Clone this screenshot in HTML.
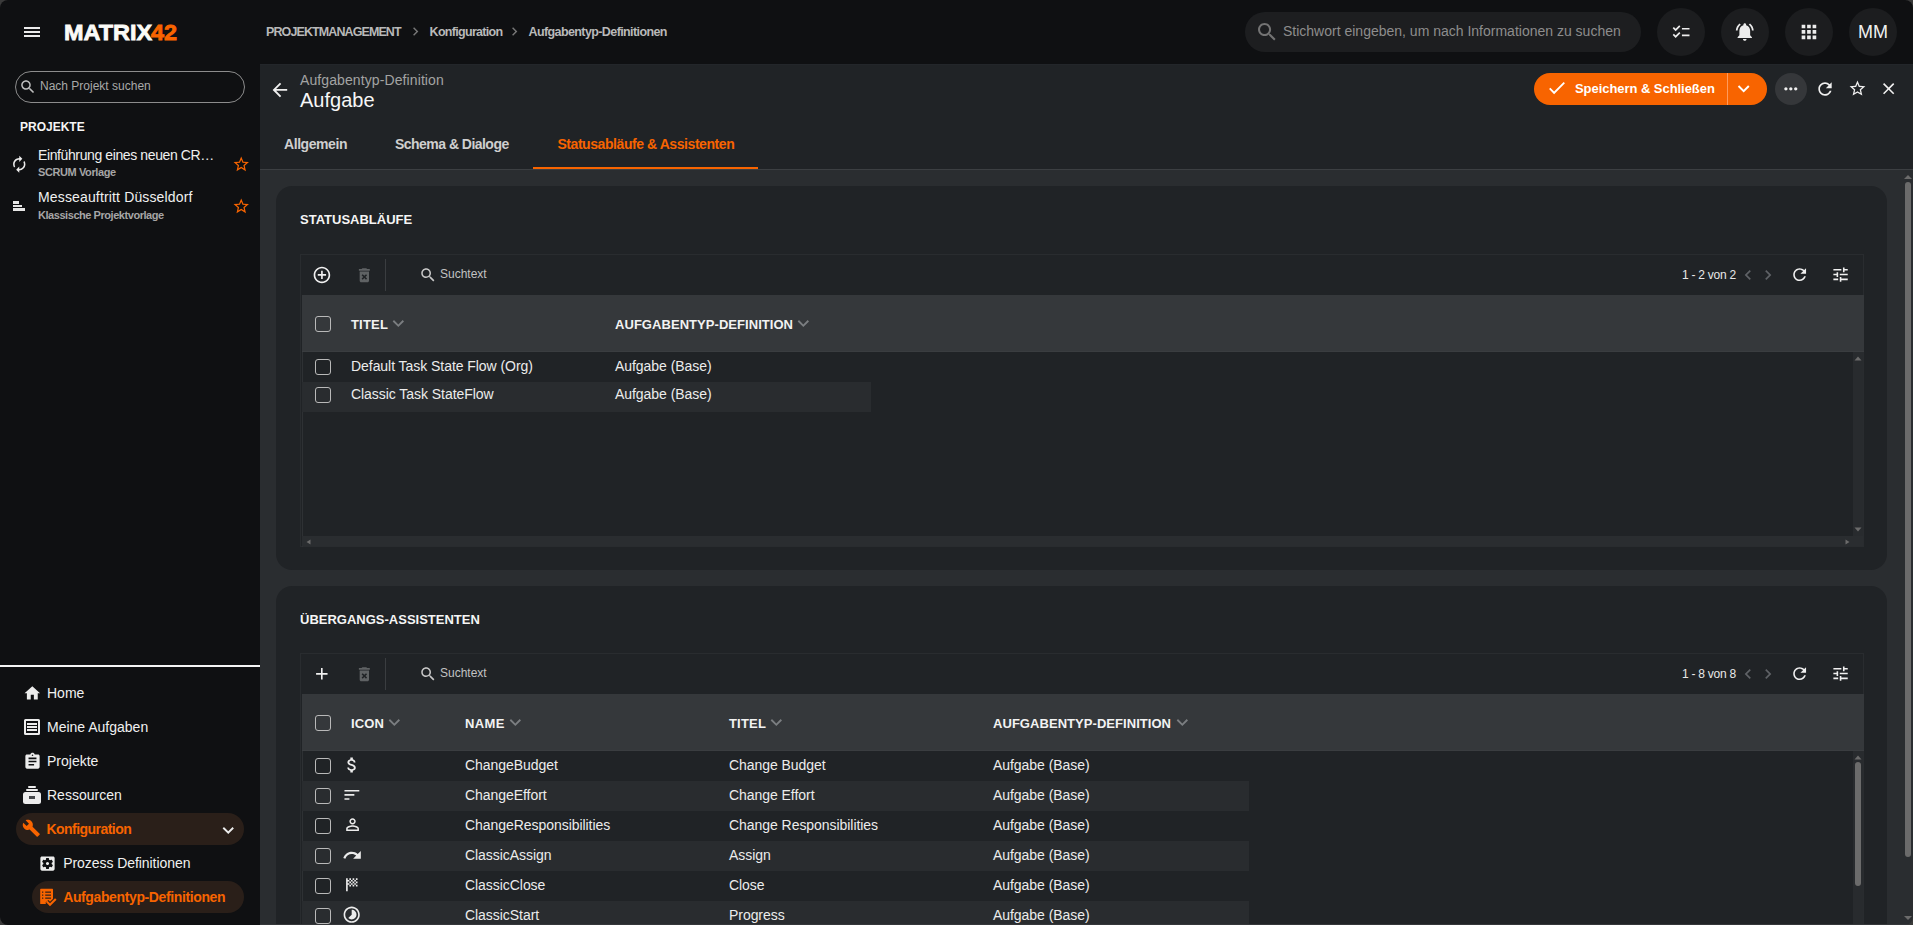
<!DOCTYPE html>
<html><head><meta charset="utf-8"><style>
html,body{margin:0;padding:0;width:1913px;height:925px;overflow:hidden;background:#0f1012}
body{position:relative;font-family:"Liberation Sans", sans-serif}
.t{position:absolute;white-space:nowrap;line-height:1}
.r{position:absolute}
.i{position:absolute;display:block;overflow:visible}
.cb{position:absolute;width:16px;height:16px;box-sizing:border-box;border:1.5px solid #b9b9b9;border-radius:3px}
</style></head><body>
<div class="r" style="left:0px;top:0px;width:1913px;height:925px;background:#0f1012;"></div>
<div class="r" style="left:260px;top:64px;width:1653px;height:861px;background:#202326;"></div>
<div class="r" style="left:260px;top:170px;width:1653px;height:755px;background:#2a2d30;"></div>
<div class="r" style="left:260px;top:169px;width:1653px;height:1px;background:#3c3f42;"></div>
<div class="r" style="left:260px;top:64px;width:1653px;height:1px;background:#23262a;"></div>
<div class="r" style="left:24px;top:27px;width:16px;height:2px;background:#ebebeb;"></div>
<div class="r" style="left:24px;top:31px;width:16px;height:2px;background:#ebebeb;"></div>
<div class="r" style="left:24px;top:35px;width:16px;height:2px;background:#ebebeb;"></div>
<div class="t" style="left:64px;top:21.6px;font-size:22px;font-weight:bold;color:#fbfbf7;letter-spacing:0px;line-height:22px;-webkit-text-stroke:0.8px #fbfbf7;transform:scaleX(1.065);transform-origin:0 0">MATRIX<span style="color:#f86400;-webkit-text-stroke:0.8px #f86400;margin-left:-1px">42</span></div>
<div class="t" style="left:266px;top:25.52px;font-size:12.5px;color:#b9b9b9;font-weight:bold;letter-spacing:-0.9px;">PROJEKTMANAGEMENT</div>
<svg class="i" style="left:406.57px;top:23.23px;width:17.04px;height:17.04px" viewBox="0 0 24 24"><path fill="#777" d="M10 6L8.59 7.41 13.17 12l-4.58 4.59L10 18l6-6z"/></svg>
<div class="t" style="left:429.6px;top:25.52px;font-size:12.5px;color:#b9b9b9;font-weight:bold;letter-spacing:-0.7px;">Konfiguration</div>
<svg class="i" style="left:505.97px;top:23.23px;width:17.04px;height:17.04px" viewBox="0 0 24 24"><path fill="#777" d="M10 6L8.59 7.41 13.17 12l-4.58 4.59L10 18l6-6z"/></svg>
<div class="t" style="left:528.5px;top:25.52px;font-size:12.5px;color:#b9b9b9;font-weight:bold;letter-spacing:-0.6px;">Aufgabentyp-Definitionen</div>
<div class="r" style="left:1245px;top:12px;width:396px;height:40px;background:#1d1e20;border-radius:20px"></div>
<svg class="i" style="left:1255.18px;top:19.88px;width:24.15px;height:24.15px" viewBox="0 0 24 24"><path fill="#737373" d="M15.5 14h-.79l-.28-.27C15.41 12.59 16 11.11 16 9.5 16 5.91 13.09 3 9.5 3S3 5.910 3 9.5 5.91 16 9.5 16c1.61 0 3.09-.59 4.23-1.57l.27.28v.79l5 4.99L20.490 19l-4.99-5zm-6 0C7.01 14 5 11.99 5 9.5S7.01 5 9.5 5 14 7.01 14 9.5 11.99 14 9.5 14z"/></svg>
<div class="t" style="left:1283px;top:24.45px;font-size:14px;color:#8d8d8d;font-weight:normal;letter-spacing:0px;">Stichwort eingeben, um nach Informationen zu suchen</div>
<div class="r" style="left:1657px;top:8px;width:48px;height:48px;background:#1c1d1f;border-radius:50%"></div>
<div class="r" style="left:1721px;top:8px;width:48px;height:48px;background:#1c1d1f;border-radius:50%"></div>
<div class="r" style="left:1785px;top:8px;width:48px;height:48px;background:#1c1d1f;border-radius:50%"></div>
<div class="r" style="left:1849px;top:8px;width:48px;height:48px;background:#1c1d1f;border-radius:50%"></div>
<svg class="i" style="left:1670.90px;top:22.25px;width:20.20px;height:20.20px" viewBox="0 0 24 24"><path fill="#ececec" d="M22 7h-9v2h9V7zm0 8h-9v2h9v-2zM5.54 11L2 7.46l1.41-1.41 2.12 2.12 4.24-4.24 1.41 1.41L5.54 11zm0 8L2 15.46l1.41-1.41 2.12 2.12 4.24-4.24 1.41 1.41L5.54 19z"/></svg>
<svg class="i" style="left:1734.23px;top:21.31px;width:21.54px;height:21.54px" viewBox="0 0 24 24"><path fill="#ececec" d="M7.58 4.08L6.15 2.65C3.75 4.48 2.17 7.3 2.03 10.5h2c.15-2.65 1.51-4.97 3.55-6.42zm12.39 6.42h2c-.15-3.2-1.73-6.02-4.12-7.85l-1.42 1.430c2.02 1.45 3.39 3.77 3.54 6.42zM18 11c0-3.07-1.64-5.64-4.5-6.32V4c0-.83-.67-1.5-1.5-1.5s-1.5.67-1.5 1.5v.68C7.63 5.36 6 7.92 6 11v5l-2 2v1h16v-1l-2-2v-5zm-6 11c.14 0 .27-.01.4-.04.65-.14 1.18-.58 1.44-1.18.1-.24.15-.5.15-.78h-4c.01 1.1.9 2 2.01 2z"/></svg>
<svg class="i" style="left:1798.00px;top:21.00px;width:21.90px;height:21.90px" viewBox="0 0 24 24"><path fill="#ececec" d="M4 8h4V4H4v4zm6 12h4v-4h-4v4zm-6 0h4v-4H4v4zm0-6h4v-4H4v4zm6 0h4v-4h-4v4zm6-10v4h4V4h-4zm-6 4h4V4h-4v4zm6 6h4v-4h-4v4zm0 6h4v-4h-4v4z"/></svg>
<div class="t" style="left:1858px;top:22.56px;font-size:18px;color:#f0f0f0;font-weight:normal;letter-spacing:0px;">MM</div>
<div class="r" style="left:15px;top:71px;width:230px;height:32px;background:transparent;border:1px solid #8c8c8c;border-radius:16px;box-sizing:border-box"></div>
<svg class="i" style="left:18.89px;top:77.99px;width:17.70px;height:17.70px" viewBox="0 0 24 24"><path fill="#bdbdbd" d="M15.5 14h-.79l-.28-.27C15.41 12.59 16 11.11 16 9.5 16 5.91 13.09 3 9.5 3S3 5.910 3 9.5 5.91 16 9.5 16c1.61 0 3.09-.59 4.23-1.57l.27.28v.79l5 4.99L20.490 19l-4.99-5zm-6 0C7.01 14 5 11.99 5 9.5S7.01 5 9.5 5 14 7.01 14 9.5 11.99 14 9.5 14z"/></svg>
<div class="t" style="left:40px;top:80.14px;font-size:12px;color:#a9a9a9;font-weight:normal;letter-spacing:0px;">Nach Projekt suchen</div>
<div class="t" style="left:20px;top:121.14px;font-size:12px;color:#f5f5f5;font-weight:bold;letter-spacing:0px;">PROJEKTE</div>
<svg class="i" style="left:9.84px;top:154.54px;width:18.52px;height:18.52px" viewBox="0 0 24 24"><path fill="#ececec" d="M12 6v3l4-4-4-4v3c-4.42 0-8 3.580-8 8 0 1.57.46 3.03 1.24 4.26L6.7 14.8c-.45-.83-.7-1.79-.7-2.8 0-3.31 2.69-6 6-6zm6.76 1.74L17.3 9.2c.44.84.7 1.79.7 2.8 0 3.31-2.69 6-6 6v-3l-4 4 4 4v-3c4.42 0 8-3.58 8-8 0-1.57-.46-3.03-1.24-4.26z"/></svg>
<div class="t" style="left:38px;top:148.25px;font-size:14px;color:#f0f0f0;font-weight:normal;letter-spacing:-0.39px;">Einführung eines neuen CR…</div>
<div class="t" style="left:38px;top:167.39px;font-size:11px;color:#a6a6a6;font-weight:bold;letter-spacing:-0.4px;">SCRUM Vorlage</div>
<svg class="i" style="left:232.12px;top:155.00px;width:18.46px;height:18.46px" viewBox="0 0 24 24"><path fill="#f86400" d="M22 9.24l-7.19-.62L12 2 9.19 8.63 2 9.24l5.46 4.73L5.82 21 12 17.27 18.18 21l-1.63-7.03L22 9.24zM12 15.4l-3.76 2.27 1-4.28-3.32-2.88 4.38-.38L12 6.1l1.71 4.04 4.38.38-3.32 2.88 1 4.28L12 15.4z"/></svg>
<div class="r" style="left:13px;top:201px;width:13px;height:10px"><div class="r" style="left:0;top:0;width:6px;height:3px;background:#e6e6e6"></div><div class="r" style="left:0;top:4px;width:9px;height:2.2px;background:#e6e6e6"></div><div class="r" style="left:0;top:7px;width:12.2px;height:3px;background:#e6e6e6"></div></div>
<div class="t" style="left:38px;top:190.05px;font-size:14px;color:#f0f0f0;font-weight:normal;letter-spacing:0.15px;">Messeauftritt Düsseldorf</div>
<div class="t" style="left:38px;top:209.69px;font-size:11px;color:#a6a6a6;font-weight:bold;letter-spacing:-0.45px;">Klassische Projektvorlage</div>
<svg class="i" style="left:232.12px;top:197.20px;width:18.46px;height:18.46px" viewBox="0 0 24 24"><path fill="#f86400" d="M22 9.24l-7.19-.62L12 2 9.19 8.63 2 9.24l5.46 4.73L5.82 21 12 17.27 18.18 21l-1.63-7.03L22 9.24zM12 15.4l-3.76 2.27 1-4.28-3.32-2.88 4.38-.38L12 6.1l1.71 4.04 4.38.38-3.32 2.88 1 4.28L12 15.4z"/></svg>
<div class="r" style="left:0px;top:665px;width:260px;height:2px;background:#f4f4f4;"></div>
<svg class="i" style="left:22.63px;top:683.57px;width:18.64px;height:18.64px" viewBox="0 0 24 24"><path fill="#ececec" d="M10 20v-6h4v6h5v-8h3L12 3 2 12h3v8z"/></svg>
<div class="t" style="left:47px;top:686.35px;font-size:14px;color:#f0f0f0;font-weight:normal;letter-spacing:0px;">Home</div>
<div class="r" style="left:24.3px;top:719px;width:15.7px;height:15.7px;box-sizing:border-box;border:2px solid #ececec;border-radius:1.5px"><div class="r" style="left:1px;top:2px;width:9.7px;height:2px;background:#ececec"></div><div class="r" style="left:1px;top:5px;width:9.7px;height:2px;background:#ececec"></div><div class="r" style="left:1px;top:8px;width:9.7px;height:2px;background:#ececec"></div></div>
<div class="t" style="left:47px;top:720.45px;font-size:14px;color:#f0f0f0;font-weight:normal;letter-spacing:0px;">Meine Aufgaben</div>
<svg class="i" style="left:22.60px;top:751.54px;width:19.01px;height:19.01px" viewBox="0 0 24 24"><path fill="#ececec" d="M19 3h-4.18C14.4 1.84 13.3 1 12 1c-1.3 0-2.4.84-2.820 2H5c-1.1 0-2 .9-2 2v14c0 1.1.9 2 2 2h14c1.1 0 2-.9 2-2V5c0-1.1-.9-2-2-2zm-7 0c.55 0 1 .45 1 1s-.45 1-1 1-1-.45-1-1 .45-1 1-1zm2 14H7v-2h7v2zm3-4H7v-2h10v2zm0-4H7V7h10v2z"/></svg>
<div class="t" style="left:47px;top:753.95px;font-size:14px;color:#f0f0f0;font-weight:normal;letter-spacing:0px;">Projekte</div>
<div class="r" style="left:23.4px;top:785.8px;width:18px;height:19px"><div class="r" style="left:4.6px;top:0;width:7.8px;height:2px;background:#ececec;border-radius:1px"></div><div class="r" style="left:2.7px;top:3.1px;width:11.9px;height:2px;background:#ececec;border-radius:1px"></div><div class="r" style="left:0;top:6px;width:17.3px;height:12.2px;background:#ececec;border-radius:2.5px"></div><div class="r" style="left:5.3px;top:10.6px;width:6.8px;height:2.4px;background:#45474a"></div></div>
<div class="t" style="left:47px;top:788.15px;font-size:14px;color:#f0f0f0;font-weight:normal;letter-spacing:0px;">Ressourcen</div>
<div class="r" style="left:16px;top:813px;width:228px;height:32px;background:#2a1f19;border-radius:16px"></div>
<svg class="i" style="left:22.06px;top:819.45px;width:18.63px;height:18.63px" viewBox="0 0 24 24"><path fill="#f86400" d="M22.7 19l-9.1-9.1c.9-2.3.4-5-1.5-6.9-2-2-5-2.4-7.4-1.3L9 6 6 9 1.6 4.7C.4 7.1.9 10.1 2.9 12.1c1.9 1.9 4.6 2.4 6.9 1.5l9.1 9.1c.4.4 1 .4 1.4 0l2.3-2.3c.5-.4.5-1.1.1-1.4z"/></svg>
<div class="t" style="left:46.4px;top:822.15px;font-size:14px;color:#f86400;font-weight:bold;letter-spacing:-0.53px;">Konfiguration</div>
<svg class="i" style="left:216.75px;top:818.72px;width:22.50px;height:22.50px" viewBox="0 0 24 24"><path fill="#ececec" d="M16.59 8.59L12 13.17 7.41 8.59 6 10l6 6 6-6z"/></svg>
<svg class="i" style="left:38.45px;top:853.50px;width:19.00px;height:19.00px" viewBox="0 0 24 24"><path fill="#ececec" d="M12 10c-1.1 0-2 .9-2 2s.9 2 2 2 2-.9 2-2-.9-2-2-2zm7-7H5c-1.11 0-2 .9-2 2v14c0 1.1.89 2 2 2h14c1.11 0 2-.9 2-2V5c0-1.1-.89-2-2-2zm-1.75 9c0 .23-.02.46-.05.68l1.48 1.16c.13.11.17.3.08.45l-1.4 2.42c-.09.15-.27.21-.43.15l-1.74-.7c-.36.28-.76.51-1.18.69l-.26 1.85c-.03.17-.18.3-.35.3h-2.8c-.17 0-.32-.13-.35-.29l-.26-1.85c-.43-.18-.82-.41-1.18-.69l-1.74.7c-.16.06-.34 0-.43-.15l-1.4-2.42c-.09-.15-.05-.34.08-.45l1.48-1.16c-.03-.23-.05-.46-.05-.69 0-.23.02-.46.05-.68l-1.48-1.16c-.13-.11-.17-.3-.08-.45l1.4-2.42c.09-.15.27-.21.43-.15l1.74.7c.36-.28.76-.51 1.18-.69l.26-1.85c.03-.17.18-.3.35-.3h2.8c.17 0 .32.13.35.29l.26 1.85c.43.18.82.41 1.18.69l1.74-.7c.16-.06.34 0 .43.15l1.4 2.42c.09.15.05.34-.08.45l-1.48 1.16c.03.23.05.46.05.69z"/></svg>
<div class="t" style="left:63.2px;top:855.95px;font-size:14px;color:#f0f0f0;font-weight:normal;letter-spacing:-0.06px;">Prozess Definitionen</div>
<div class="r" style="left:32px;top:881px;width:212px;height:32px;background:#2a1f19;border-radius:16px"></div>
<svg class="i" style="left:38px;top:886px;width:20px;height:22px" viewBox="0 0 20 22"><rect x="2.2" y="2.8" width="12.8" height="15.2" rx="0.6" fill="#f86400"/><g fill="#3a2418"><rect x="4" y="5.5" width="1.3" height="1.3"/><rect x="4" y="8.5" width="1.3" height="1.3"/><rect x="4" y="11.5" width="1.3" height="1.3"/><rect x="7.2" y="5.5" width="5.8" height="1.3"/><rect x="7.2" y="8.5" width="5.8" height="1.3"/><rect x="7.2" y="11.5" width="5.8" height="1.3"/></g><polyline points="8.8,15.6 12,18.8 17.8,13" fill="none" stroke="#2a1f19" stroke-width="4.2"/><polyline points="8.8,15.6 12,18.8 17.8,13" fill="none" stroke="#f86400" stroke-width="2.1"/></svg>
<div class="t" style="left:63.2px;top:890.15px;font-size:14px;color:#f86400;font-weight:bold;letter-spacing:-0.38px;">Aufgabentyp-Definitionen</div>
<svg class="i" style="left:268.84px;top:78.99px;width:21.83px;height:21.83px" viewBox="0 0 24 24"><path fill="#f0f0f0" d="M20 11H7.83l5.59-5.59L12 4l-8 8 8 8 1.41-1.41L7.83 13H20v-2z"/></svg>
<div class="t" style="left:300px;top:72.85px;font-size:14px;color:#a3a3a3;font-weight:normal;letter-spacing:0.1px;">Aufgabentyp-Definition</div>
<div class="t" style="left:300px;top:90.07px;font-size:20px;color:#f7f7f7;font-weight:normal;letter-spacing:0px;">Aufgabe</div>
<div class="r" style="left:1534px;top:73px;width:233px;height:32px;background:#f86400;border-radius:16px"></div>
<div class="r" style="left:1727px;top:73px;width:1px;height:32px;background:#ff9a5c;"></div>
<svg class="i" style="left:1545.99px;top:76.61px;width:21.65px;height:21.65px" viewBox="0 0 24 24"><path fill="#fff" d="M9 16.17L4.83 12l-1.42 1.41L9 19 21 7l-1.41-1.41z"/></svg>
<div class="t" style="left:1575px;top:81.70px;font-size:13px;color:#fff;font-weight:bold;letter-spacing:-0.05px;">Speichern &amp; Schließen</div>
<svg class="i" style="left:1732.33px;top:77.25px;width:23.34px;height:23.34px" viewBox="0 0 24 24"><path fill="#fff" d="M16.59 8.59L12 13.17 7.41 8.59 6 10l6 6 6-6z"/></svg>
<div class="r" style="left:1775px;top:73px;width:32px;height:32px;background:#35373a;border-radius:50%"></div>
<svg class="i" style="left:1781.33px;top:78.87px;width:19.65px;height:19.65px" viewBox="0 0 24 24"><path fill="#f0f0f0" d="M6 10c-1.1 0-2 .9-2 2s.9 2 2 2 2-.9 2-2-.9-2-2-2zm12 0c-1.1 0-2 .9-2 2s.9 2 2 2 2-.9 2-2-.9-2-2-2zm-6 0c-1.1 0-2 .9-2 2s.9 2 2 2 2-.9 2-2-.9-2-2-2z"/></svg>
<svg class="i" style="left:1814.98px;top:78.93px;width:20.03px;height:20.03px" viewBox="0 0 24 24"><path fill="#f0f0f0" d="M17.65 6.35C16.2 4.9 14.21 4 12 4c-4.42 0-7.99 3.58-7.99 8s3.57 8 7.99 8c3.73 0 6.84-2.55 7.73-6h-2.08c-.82 2.33-3.04 4-5.65 4-3.31 0-6-2.69-6-6s2.69-6 6-6c1.66 0 3.14.69 4.22 1.78L13 11h7V4l-2.35 2.35z"/></svg>
<svg class="i" style="left:1847.53px;top:79.32px;width:18.95px;height:18.95px" viewBox="0 0 24 24"><path fill="#f0f0f0" d="M22 9.24l-7.19-.62L12 2 9.19 8.63 2 9.24l5.46 4.73L5.82 21 12 17.27 18.18 21l-1.63-7.03L22 9.24zM12 15.4l-3.76 2.27 1-4.28-3.32-2.88 4.38-.38L12 6.1l1.71 4.04 4.38.38-3.32 2.88 1 4.28L12 15.4z"/></svg>
<svg class="i" style="left:1879.36px;top:79.31px;width:19.29px;height:19.29px" viewBox="0 0 24 24"><path fill="#f0f0f0" d="M19 6.41L17.59 5 12 10.59 6.41 5 5 6.41 10.59 12 5 17.59 6.41 19 12 13.410 17.59 19 19 17.59 13.41 12z"/></svg>
<div class="t" style="left:284px;top:137.15px;font-size:14px;color:#cfcfcf;font-weight:bold;letter-spacing:-0.43px;">Allgemein</div>
<div class="t" style="left:395px;top:137.15px;font-size:14px;color:#cfcfcf;font-weight:bold;letter-spacing:-0.53px;">Schema &amp; Dialoge</div>
<div class="t" style="left:557.4px;top:137.15px;font-size:14px;color:#f86400;font-weight:bold;letter-spacing:-0.43px;">Statusabläufe &amp; Assistenten</div>
<div class="r" style="left:533px;top:167px;width:225px;height:2px;background:#f86400;"></div>
<svg class="i" style="left:1903px;top:174px;width:10px;height:6px" viewBox="0 0 10 6"><path fill="#6b6b6b" d="M5 1L9 5H1z"/></svg>
<div class="r" style="left:1905px;top:182px;width:6px;height:675px;background:#6b6b6b;border-radius:3px"></div>
<svg class="i" style="left:1903px;top:915px;width:10px;height:6px" viewBox="0 0 10 6"><path fill="#6b6b6b" d="M1 1H9L5 5z"/></svg>
<div class="r" style="left:276px;top:186px;width:1611px;height:384px;background:#202326;border-radius:16px"></div>
<div class="t" style="left:300px;top:212.90px;font-size:13px;color:#f5f5f5;font-weight:bold;letter-spacing:0px;">STATUSABLÄUFE</div>
<div class="r" style="left:300px;top:254px;width:1564px;height:293px;background:transparent;border:1px solid #292c2f;box-sizing:border-box"></div>
<div class="r" style="left:302px;top:352px;width:1px;height:195px;background:#2e3134;"></div>
<svg class="i" style="left:312.02px;top:265.07px;width:19.86px;height:19.86px" viewBox="0 0 24 24"><path fill="#f0f0f0" d="M13 7h-2v4H7v2h4v4h2v-4h4v-2h-4V7zm-1-5C6.48 2 2 6.48 2 12s4.48 10 10 10 10-4.48 10-10S17.52 2 12 2zm0 18c-4.41 0-8-3.59-8-8s3.59-8 8-8 8 3.59 8 8-3.59 8-8 8z"/></svg>
<svg class="i" style="left:354.80px;top:265.80px;width:18.70px;height:18.70px" viewBox="0 0 24 24"><path fill="#5f6264" d="M6 19c0 1.1.9 2 2 2h8c1.1 0 2-.9 2-2V7H6v12zm2.46-7.12l1.41-1.41L12 12.59l2.12-2.12 1.41 1.41L13.41 14l2.12 2.12-1.41 1.41L12 15.41l-2.12 2.12-1.41-1.41L10.59 14l-2.13-2.12zM15.5 4l-1-1h-5l-1 1H5v2h14V4z"/></svg>
<div class="r" style="left:385px;top:259px;width:1px;height:32px;background:#3a3d40;"></div>
<svg class="i" style="left:418.67px;top:265.82px;width:18.04px;height:18.04px" viewBox="0 0 24 24"><path fill="#c8c8c8" d="M15.5 14h-.79l-.28-.27C15.41 12.59 16 11.11 16 9.5 16 5.91 13.09 3 9.5 3S3 5.910 3 9.5 5.91 16 9.5 16c1.61 0 3.09-.59 4.23-1.57l.27.28v.79l5 4.99L20.490 19l-4.99-5zm-6 0C7.01 14 5 11.99 5 9.5S7.01 5 9.5 5 14 7.01 14 9.5 11.99 14 9.5 14z"/></svg>
<div class="t" style="left:440px;top:267.84px;font-size:12px;color:#c2c2c2;font-weight:normal;letter-spacing:0px;">Suchtext</div>
<div class="t" style="left:1682px;top:268.84px;font-size:12px;color:#e8e8e8;font-weight:normal;letter-spacing:-0.25px;">1 - 2 von 2</div>
<svg class="i" style="left:1738.13px;top:264.98px;width:20.04px;height:20.04px" viewBox="0 0 24 24"><path fill="#5f6266" d="M15.41 7.41L14 6l-6 6 6 6 1.41-1.41L10.83 12z"/></svg>
<svg class="i" style="left:1757.83px;top:264.98px;width:20.04px;height:20.04px" viewBox="0 0 24 24"><path fill="#5f6266" d="M10 6L8.59 7.41 13.17 12l-4.58 4.59L10 18l6-6z"/></svg>
<svg class="i" style="left:1789.51px;top:265.36px;width:19.28px;height:19.28px" viewBox="0 0 24 24"><path fill="#f0f0f0" d="M17.65 6.35C16.2 4.9 14.21 4 12 4c-4.42 0-7.99 3.58-7.99 8s3.57 8 7.99 8c3.73 0 6.84-2.55 7.73-6h-2.08c-.82 2.33-3.04 4-5.65 4-3.31 0-6-2.69-6-6s2.69-6 6-6c1.66 0 3.14.69 4.22 1.78L13 11h7V4l-2.35 2.35z"/></svg>
<svg class="i" style="left:1831.38px;top:265.43px;width:19.13px;height:19.13px" viewBox="0 0 24 24"><path fill="#f0f0f0" d="M3 17v2h6v-2H3zM3 5v2h10V5H3zm10 16v-2h8v-2h-8v-2h-2v6h2zM7 9v2H3v2h4v2h2V9H7zm14 4v-2H11v2h10zm-6-4h2V7h4V5h-4V3h-2v6z"/></svg>
<div class="r" style="left:302px;top:295px;width:1562px;height:57px;background:#35383b;"></div>
<div class="r" style="left:302px;top:351px;width:1562px;height:1px;background:#3a3d40;"></div>
<div class="cb" style="left:315px;top:316px"></div>
<div class="t" style="left:351px;top:318.00px;font-size:13px;color:#f2f2f2;font-weight:bold;letter-spacing:0.18px;">TITEL</div>
<svg class="i" style="left:386.91px;top:311.63px;width:22.67px;height:22.67px" viewBox="0 0 24 24"><path fill="#7b7e81" d="M16.59 8.59L12 13.17 7.41 8.59 6 10l6 6 6-6z"/></svg>
<div class="t" style="left:615px;top:318.00px;font-size:13px;color:#f2f2f2;font-weight:bold;letter-spacing:0.05px;">AUFGABENTYP-DEFINITION</div>
<svg class="i" style="left:792.41px;top:311.63px;width:22.67px;height:22.67px" viewBox="0 0 24 24"><path fill="#7b7e81" d="M16.59 8.59L12 13.17 7.41 8.59 6 10l6 6 6-6z"/></svg>
<div class="cb" style="left:315px;top:359px"></div>
<div class="t" style="left:351px;top:358.75px;font-size:14px;color:#ececec;font-weight:normal;letter-spacing:-0.05px;">Default Task State Flow (Org)</div>
<div class="t" style="left:615px;top:358.75px;font-size:14px;color:#ececec;font-weight:normal;letter-spacing:-0.05px;">Aufgabe (Base)</div>
<div class="r" style="left:302px;top:382px;width:569px;height:30px;background:#292c2f;"></div>
<div class="cb" style="left:315px;top:387px"></div>
<div class="t" style="left:351px;top:386.75px;font-size:14px;color:#ececec;font-weight:normal;letter-spacing:-0.05px;">Classic Task StateFlow</div>
<div class="t" style="left:615px;top:386.75px;font-size:14px;color:#ececec;font-weight:normal;letter-spacing:-0.05px;">Aufgabe (Base)</div>
<div class="r" style="left:1853px;top:352px;width:10px;height:184px;background:#282b2e;"></div>
<svg class="i" style="left:1854px;top:356px;width:8px;height:5px" viewBox="0 0 8 5"><path fill="#6b6b6b" d="M4 0.5L7.5 4.5H0.5z"/></svg>
<svg class="i" style="left:1854px;top:527px;width:8px;height:5px" viewBox="0 0 8 5"><path fill="#6b6b6b" d="M0.5 0.5H7.5L4 4.5z"/></svg>
<div class="r" style="left:302px;top:536px;width:1561px;height:10px;background:#2a2d30;"></div>
<svg class="i" style="left:306px;top:539px;width:5px;height:6px" viewBox="0 0 5 6"><path fill="#6b6b6b" d="M0.5 3L4.5 0.5V5.5z"/></svg>
<svg class="i" style="left:1844.5px;top:538.5px;width:5px;height:6px" viewBox="0 0 5 6"><path fill="#6b6b6b" d="M4.5 3L0.5 0.5V5.5z"/></svg>
<div class="r" style="left:276px;top:586px;width:1611px;height:400px;background:#202326;border-radius:16px"></div>
<div class="t" style="left:300px;top:612.90px;font-size:13px;color:#f5f5f5;font-weight:bold;letter-spacing:0px;">ÜBERGANGS-ASSISTENTEN</div>
<div class="r" style="left:300px;top:653px;width:1564px;height:400px;background:transparent;border:1px solid #292c2f;box-sizing:border-box"></div>
<div class="r" style="left:302px;top:751px;width:1px;height:302px;background:#2e3134;"></div>
<svg class="i" style="left:312.39px;top:664.14px;width:19.63px;height:19.63px" viewBox="0 0 24 24"><path fill="#f0f0f0" d="M19 13h-6v6h-2v-6H5v-2h6V5h2v6h6v2z"/></svg>
<svg class="i" style="left:354.80px;top:664.80px;width:18.70px;height:18.70px" viewBox="0 0 24 24"><path fill="#5f6264" d="M6 19c0 1.1.9 2 2 2h8c1.1 0 2-.9 2-2V7H6v12zm2.46-7.12l1.41-1.41L12 12.59l2.12-2.12 1.41 1.41L13.41 14l2.12 2.12-1.41 1.41L12 15.41l-2.12 2.12-1.41-1.41L10.59 14l-2.13-2.12zM15.5 4l-1-1h-5l-1 1H5v2h14V4z"/></svg>
<div class="r" style="left:385px;top:658px;width:1px;height:32px;background:#3a3d40;"></div>
<svg class="i" style="left:418.67px;top:664.82px;width:18.04px;height:18.04px" viewBox="0 0 24 24"><path fill="#c8c8c8" d="M15.5 14h-.79l-.28-.27C15.41 12.59 16 11.11 16 9.5 16 5.91 13.09 3 9.5 3S3 5.910 3 9.5 5.91 16 9.5 16c1.61 0 3.09-.59 4.23-1.57l.27.28v.79l5 4.99L20.490 19l-4.99-5zm-6 0C7.01 14 5 11.99 5 9.5S7.01 5 9.5 5 14 7.01 14 9.5 11.99 14 9.5 14z"/></svg>
<div class="t" style="left:440px;top:666.84px;font-size:12px;color:#c2c2c2;font-weight:normal;letter-spacing:0px;">Suchtext</div>
<div class="t" style="left:1682px;top:667.84px;font-size:12px;color:#e8e8e8;font-weight:normal;letter-spacing:-0.25px;">1 - 8 von 8</div>
<svg class="i" style="left:1738.13px;top:663.98px;width:20.04px;height:20.04px" viewBox="0 0 24 24"><path fill="#5f6266" d="M15.41 7.41L14 6l-6 6 6 6 1.41-1.41L10.83 12z"/></svg>
<svg class="i" style="left:1757.83px;top:663.98px;width:20.04px;height:20.04px" viewBox="0 0 24 24"><path fill="#5f6266" d="M10 6L8.59 7.41 13.17 12l-4.58 4.59L10 18l6-6z"/></svg>
<svg class="i" style="left:1789.51px;top:664.36px;width:19.28px;height:19.28px" viewBox="0 0 24 24"><path fill="#f0f0f0" d="M17.65 6.35C16.2 4.9 14.21 4 12 4c-4.42 0-7.99 3.58-7.99 8s3.57 8 7.99 8c3.73 0 6.84-2.55 7.73-6h-2.08c-.82 2.33-3.04 4-5.65 4-3.31 0-6-2.69-6-6s2.69-6 6-6c1.66 0 3.14.69 4.22 1.78L13 11h7V4l-2.35 2.35z"/></svg>
<svg class="i" style="left:1831.38px;top:664.43px;width:19.13px;height:19.13px" viewBox="0 0 24 24"><path fill="#f0f0f0" d="M3 17v2h6v-2H3zM3 5v2h10V5H3zm10 16v-2h8v-2h-8v-2h-2v6h2zM7 9v2H3v2h4v2h2V9H7zm14 4v-2H11v2h10zm-6-4h2V7h4V5h-4V3h-2v6z"/></svg>
<div class="r" style="left:302px;top:694px;width:1562px;height:57px;background:#35383b;"></div>
<div class="r" style="left:302px;top:750px;width:1562px;height:1px;background:#3a3d40;"></div>
<div class="cb" style="left:315px;top:715px"></div>
<div class="t" style="left:351px;top:717.00px;font-size:13px;color:#f2f2f2;font-weight:bold;letter-spacing:0.1px;">ICON</div>
<svg class="i" style="left:383.11px;top:710.63px;width:22.67px;height:22.67px" viewBox="0 0 24 24"><path fill="#7b7e81" d="M16.59 8.59L12 13.17 7.41 8.59 6 10l6 6 6-6z"/></svg>
<div class="t" style="left:465px;top:717.00px;font-size:13px;color:#f2f2f2;font-weight:bold;letter-spacing:0.38px;">NAME</div>
<svg class="i" style="left:503.71px;top:710.63px;width:22.67px;height:22.67px" viewBox="0 0 24 24"><path fill="#7b7e81" d="M16.59 8.59L12 13.17 7.41 8.59 6 10l6 6 6-6z"/></svg>
<div class="t" style="left:729px;top:717.00px;font-size:13px;color:#f2f2f2;font-weight:bold;letter-spacing:0.18px;">TITEL</div>
<svg class="i" style="left:764.91px;top:710.63px;width:22.67px;height:22.67px" viewBox="0 0 24 24"><path fill="#7b7e81" d="M16.59 8.59L12 13.17 7.41 8.59 6 10l6 6 6-6z"/></svg>
<div class="t" style="left:993px;top:717.00px;font-size:13px;color:#f2f2f2;font-weight:bold;letter-spacing:0.05px;">AUFGABENTYP-DEFINITION</div>
<svg class="i" style="left:1170.91px;top:710.63px;width:22.67px;height:22.67px" viewBox="0 0 24 24"><path fill="#7b7e81" d="M16.59 8.59L12 13.17 7.41 8.59 6 10l6 6 6-6z"/></svg>
<div class="cb" style="left:315px;top:758px"></div>
<svg class="i" style="left:341.97px;top:755.38px;width:20.04px;height:20.04px" viewBox="0 0 24 24"><path fill="#ececec" d="M11.8 10.9c-2.27-.59-3-1.2-3-2.15 0-1.09 1.01-1.85 2.7-1.85 1.78 0 2.44.85 2.5 2.1h2.21c-.07-1.72-1.12-3.3-3.21-3.81V3h-3v2.16c-1.94.42-3.5 1.68-3.5 3.61 0 2.31 1.91 3.46 4.7 4.13 2.5.6 3 1.48 3 2.41 0 .69-.49 1.79-2.7 1.79-2.06 0-2.87-.92-2.98-2.1h-2.2c.12 2.19 1.76 3.42 3.68 3.83V21h3v-2.15c1.95-.37 3.5-1.5 3.5-3.55 0-2.84-2.43-3.81-4.7-4.4z"/></svg>
<div class="t" style="left:465px;top:757.75px;font-size:14px;color:#ececec;font-weight:normal;letter-spacing:-0.05px;">ChangeBudget</div>
<div class="t" style="left:729px;top:757.75px;font-size:14px;color:#ececec;font-weight:normal;letter-spacing:-0.05px;">Change Budget</div>
<div class="t" style="left:993px;top:757.75px;font-size:14px;color:#ececec;font-weight:normal;letter-spacing:-0.05px;">Aufgabe (Base)</div>
<div class="r" style="left:302px;top:781px;width:947px;height:30px;background:#292c2f;"></div>
<div class="cb" style="left:315px;top:788px"></div>
<svg class="i" style="left:342.02px;top:784.97px;width:19.77px;height:19.77px" viewBox="0 0 24 24"><path fill="#ececec" d="M3 18h6v-2H3v2zM3 6v2h18V6H3zm0 7h12v-2H3v2z"/></svg>
<div class="t" style="left:465px;top:787.75px;font-size:14px;color:#ececec;font-weight:normal;letter-spacing:-0.05px;">ChangeEffort</div>
<div class="t" style="left:729px;top:787.75px;font-size:14px;color:#ececec;font-weight:normal;letter-spacing:-0.05px;">Change Effort</div>
<div class="t" style="left:993px;top:787.75px;font-size:14px;color:#ececec;font-weight:normal;letter-spacing:-0.05px;">Aufgabe (Base)</div>
<div class="cb" style="left:315px;top:818px"></div>
<svg class="i" style="left:342.64px;top:815.39px;width:19.12px;height:19.12px" viewBox="0 0 24 24"><path fill="#ececec" d="M12 5.9c1.16 0 2.1.94 2.1 2.1s-.94 2.1-2.1 2.1S9.9 9.16 9.9 8s.94-2.1 2.1-2.1m0 9c2.97 0 6.1 1.46 6.1 2.1v1.1H5.9V17c0-.64 3.13-2.1 6.1-2.1M12 4C9.79 4 8 5.79 8 8s1.79 4 4 4 4-1.79 4-4-1.79-4-4-4zm0 9c-2.67 0-8 1.34-8 4v3h16v-3c0-2.66-5.33-4-8-4z"/></svg>
<div class="t" style="left:465px;top:817.75px;font-size:14px;color:#ececec;font-weight:normal;letter-spacing:-0.05px;">ChangeResponsibilities</div>
<div class="t" style="left:729px;top:817.75px;font-size:14px;color:#ececec;font-weight:normal;letter-spacing:-0.05px;">Change Responsibilities</div>
<div class="t" style="left:993px;top:817.75px;font-size:14px;color:#ececec;font-weight:normal;letter-spacing:-0.05px;">Aufgabe (Base)</div>
<div class="r" style="left:302px;top:841px;width:947px;height:30px;background:#292c2f;"></div>
<div class="cb" style="left:315px;top:848px"></div>
<svg class="i" style="left:342.13px;top:844.81px;width:20.54px;height:20.54px" viewBox="0 0 24 24"><path fill="#ececec" d="M18.4 10.6C16.55 8.99 14.15 8 11.5 8c-4.65 0-8.58 3.03-9.96 7.22L3.9 16c1.05-3.19 4.05-5.5 7.6-5.5 1.95 0 3.73.72 5.12 1.88L13 16h9V7l-3.6 3.6z"/></svg>
<div class="t" style="left:465px;top:847.75px;font-size:14px;color:#ececec;font-weight:normal;letter-spacing:-0.05px;">ClassicAssign</div>
<div class="t" style="left:729px;top:847.75px;font-size:14px;color:#ececec;font-weight:normal;letter-spacing:-0.05px;">Assign</div>
<div class="t" style="left:993px;top:847.75px;font-size:14px;color:#ececec;font-weight:normal;letter-spacing:-0.05px;">Aufgabe (Base)</div>
<div class="cb" style="left:315px;top:878px"></div>
<svg class="i" style="left:342.15px;top:874.85px;width:19.60px;height:19.60px" viewBox="0 0 24 24"><path fill="#ececec" d="M11 6H9V4h2v2zm4-2h-2v2h2V4zM9 14h2v-2H9v2zm10-4V8h-2v2h2zm0 4v-2h-2v2h2zm-6 0h2v-2h-2v2zm6-10h-2v2h2V4zm-6 4V6h-2v2h2zM7 10V8h2V6H7V4H5v16h2v-8h2v-2H7zm8 2h2v-2h-2v2zm-4-2v2h2v-2h-2zM9 8v2h2V8H9zm4 2h2V8h-2v2zm2-4v2h2V6h-2z"/></svg>
<div class="t" style="left:465px;top:877.75px;font-size:14px;color:#ececec;font-weight:normal;letter-spacing:-0.05px;">ClassicClose</div>
<div class="t" style="left:729px;top:877.75px;font-size:14px;color:#ececec;font-weight:normal;letter-spacing:-0.05px;">Close</div>
<div class="t" style="left:993px;top:877.75px;font-size:14px;color:#ececec;font-weight:normal;letter-spacing:-0.05px;">Aufgabe (Base)</div>
<div class="r" style="left:302px;top:901px;width:947px;height:30px;background:#292c2f;"></div>
<div class="cb" style="left:315px;top:908px"></div>
<svg class="i" style="left:342.31px;top:905.26px;width:19.38px;height:19.38px" viewBox="0 0 24 24"><path fill="#ececec" d="M16.24 7.76C15.07 6.59 13.54 6 12 6v6l-4.24 4.24c2.34 2.34 6.14 2.34 8.49 0 2.34-2.34 2.34-6.14-.01-8.48zM12 2C6.48 2 2 6.48 2 12s4.48 10 10 10 10-4.48 10-10S17.52 2 12 2zm0 18c-4.42 0-8-3.58-8-8s3.58-8 8-8 8 3.58 8 8-3.58 8-8 8z"/></svg>
<div class="t" style="left:465px;top:907.75px;font-size:14px;color:#ececec;font-weight:normal;letter-spacing:-0.05px;">ClassicStart</div>
<div class="t" style="left:729px;top:907.75px;font-size:14px;color:#ececec;font-weight:normal;letter-spacing:-0.05px;">Progress</div>
<div class="t" style="left:993px;top:907.75px;font-size:14px;color:#ececec;font-weight:normal;letter-spacing:-0.05px;">Aufgabe (Base)</div>
<div class="r" style="left:1853px;top:751px;width:10px;height:200px;background:#282b2e;"></div>
<svg class="i" style="left:1854px;top:755px;width:8px;height:5px" viewBox="0 0 8 5"><path fill="#6b6b6b" d="M4 0.5L7.5 4.5H0.5z"/></svg>
<div class="r" style="left:1855px;top:762px;width:6px;height:124px;background:#6b6b6b;border-radius:3px"></div>
<div class="r" style="left:260px;top:924px;width:1653px;height:1px;background:#35373a;"></div>
<div class="r" style="left:0;top:0;width:1913px;height:925px;border-radius:8px;box-shadow:0 0 0 12px #3a3a3a;pointer-events:none"></div>
</body></html>
